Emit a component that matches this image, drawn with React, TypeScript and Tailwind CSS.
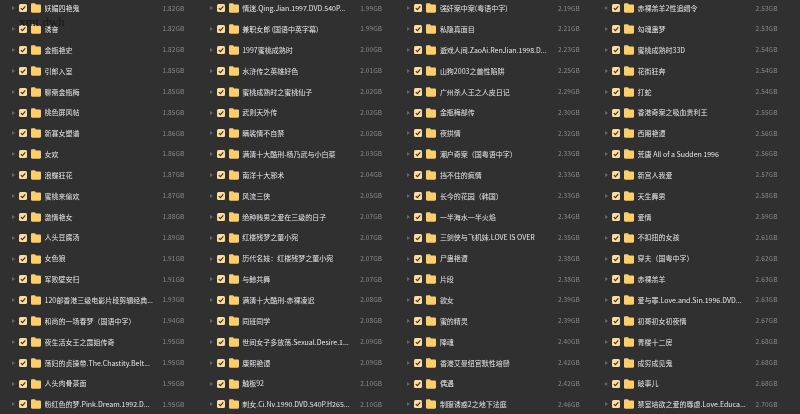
const columns: [string, string][][] = [
  [
    ['妖媚四艳鬼', '1.82GB'],
    ['诱奋', '1.82GB'],
    ['金瓶艳史', '1.82GB'],
    ['引郎入室', '1.85GB'],
    ['聊斋金瓶梅', '1.85GB'],
    ['桃色屏风帖', '1.85GB'],
    ['新寡女塑谱', '1.86GB'],
    ['女欢', '1.86GB'],
    ['浪蝶狂花', '1.87GB'],
    ['蜜桃来偷欢', '1.87GB'],
    ['激情艳女', '1.88GB'],
    ['人头豆腐汤', '1.89GB'],
    ['女色狼', '1.91GB'],
    ['军败壁安扫', '1.91GB'],
    ['120部香港三级电影片段剪辑经典...', '1.93GB'],
    ['和尚的一场春梦（国语中字）', '1.94GB'],
    ['夜生活女王之霞姐传奇', '1.95GB'],
    ['荡妇的贞操带.The.Chastity.Belt...', '1.95GB'],
    ['人头肉骨茶面', '1.95GB'],
    ['粉红色的梦.Pink.Dream.1992.D...', '1.95GB'],
  ],
  [
    ['情迷.Qing.Jian.1997.DVD.540P...', '1.99GB'],
    ['兼职女郎 (国语中英字幕)', '1.99GB'],
    ['1997蜜桃成熟时', '2.00GB'],
    ['水浒传之英雄好色', '2.01GB'],
    ['蜜桃成熟时之蜜桃仙子', '2.02GB'],
    ['武则天外传', '2.02GB'],
    ['瞒裟情不自禁', '2.02GB'],
    ['满清十大酷刑-杨乃武与小白菜', '2.03GB'],
    ['南洋十大邪术', '2.04GB'],
    ['风流三侠', '2.05GB'],
    ['绝种贱男之爱在三级的日子', '2.07GB'],
    ['红楼残梦之董小宛', '2.07GB'],
    ['历代名妓：红楼残梦之董小宛', '2.07GB'],
    ['与鲸共舞', '2.07GB'],
    ['满清十大酷刑-赤裸凌迟', '2.08GB'],
    ['同班同学', '2.08GB'],
    ['世间女子多放荡.Sexual.Desire.1...', '2.09GB'],
    ['康熙艳谭', '2.09GB'],
    ['触板92', '2.10GB'],
    ['刺女.Ci.Nv.1990.DVD.540P.H265...', '2.10GB'],
  ],
  [
    ['强奸案中案(粤语中字)', '2.19GB'],
    ['私隐真面目', '2.21GB'],
    ['遊戏人间.ZaoAi.RenJian.1998.D...', '2.23GB'],
    ['山狗2003之兽性陷阱', '2.25GB'],
    ['广州杀人王之人皮日记', '2.29GB'],
    ['金瓶梅部传', '2.30GB'],
    ['夜拱情', '2.32GB'],
    ['潮户奇案（国粤语中字）', '2.33GB'],
    ['挡不住的疯情', '2.33GB'],
    ['长今的花园（韩国）', '2.33GB'],
    ['一半海水一半火焰', '2.34GB'],
    ['三剑侠与飞机妹.LOVE IS OVER', '2.35GB'],
    ['尸蛊艳谭', '2.38GB'],
    ['片段', '2.38GB'],
    ['欲女', '2.39GB'],
    ['蜜的精灵', '2.39GB'],
    ['降魂', '2.40GB'],
    ['香港艾曼纽官默性培鬃', '2.42GB'],
    ['偶遇', '2.42GB'],
    ['制服诱惑2之地下法庭', '2.46GB'],
  ],
  [
    ['赤裸羔羊2性追缉令', '2.53GB'],
    ['勾魂蛊梦', '2.53GB'],
    ['蜜桃成熟时33D', '2.54GB'],
    ['花街狂奔', '2.54GB'],
    ['打蛇', '2.54GB'],
    ['香港奇案之吸血贵利王', '2.55GB'],
    ['西厢艳谭', '2.56GB'],
    ['荒唐 All of a Sudden 1996', '2.56GB'],
    ['新宫人我爱', '2.57GB'],
    ['天生舞男', '2.58GB'],
    ['爱情', '2.59GB'],
    ['不扣扭的女孩', '2.61GB'],
    ['穿夫（国粤中字）', '2.62GB'],
    ['赤裸羔羊', '2.63GB'],
    ['爱与罪.Love.and.Sin.1996.DVD...', '2.63GB'],
    ['初哥初女初夜情', '2.67GB'],
    ['青楼十二房', '2.68GB'],
    ['成穷成见鬼', '2.68GB'],
    ['破事儿', '2.68GB'],
    ['禁室培欲之爱的辱虐.Love.Educa...', '2.70GB'],
  ],
];

function FolderIcon() {
  return (
    <svg viewBox="0 0 10 10" className="h-[10px] w-[10px] shrink-0">
      <path
        d="M0 1.4C0 .7.5.2 1.2.2h2.3c.3 0 .5.1.7.3l.8.9h3.8C9.5 1.4 10 1.9 10 2.6v6C10 9.3 9.5 9.8 8.8 9.8H1.2C.5 9.8 0 9.3 0 8.6z"
        fill="#fbcd6b"
      />
    </svg>
  );
}

function FileRow({ name, size }: { name: string; size: string }) {
  return (
    <div className="flex h-[20.85px] items-center">
      <span className="ml-[12px] h-0 w-0 border-y-[2.5px] border-l-[3.5px] border-y-transparent border-l-[#666666]" />
      <span className="ml-[4px] flex h-[8px] w-[8px] shrink-0 items-center justify-center rounded-[1.5px] bg-[#fbdc9e]">
        <svg viewBox="0 0 8 8" className="h-[8px] w-[8px]">
          <path d="M1.8 4.1 3.4 5.7 6.3 2.3" fill="none" stroke="#3a3226" strokeWidth="1.1" />
        </svg>
      </span>
      <span className="ml-[4px] flex">
        <FolderIcon />
      </span>
      <span className="ml-[3.5px] w-[118px] truncate whitespace-nowrap text-[7px] text-[#e6e6e6]">{name}</span>
      <span className="text-[6.5px] tracking-[0.1px] text-[#8a8a8a]">{size}</span>
    </div>
  );
}

export default function App() {
  return (
    <div className="relative h-[414px] w-[800px] overflow-hidden bg-[#303030] font-['Noto_Sans_CJK_SC','Liberation_Sans',sans-serif]">
      <div className="-mt-[2px] grid grid-cols-[197.7px_197.7px_197.7px_197.7px] blur-[0.35px]">
        {columns.map((rows, i) => (
          <div key={i}>
            {rows.map(([name, size]) => (
              <FileRow key={name} name={name} size={size} />
            ))}
          </div>
        ))}
      </div>
      <span className="absolute left-[19px] top-[15px] font-['Liberation_Serif',serif] text-[13px] leading-none text-[#181818]">
        xmt.dwh
      </span>
    </div>
  );
}
